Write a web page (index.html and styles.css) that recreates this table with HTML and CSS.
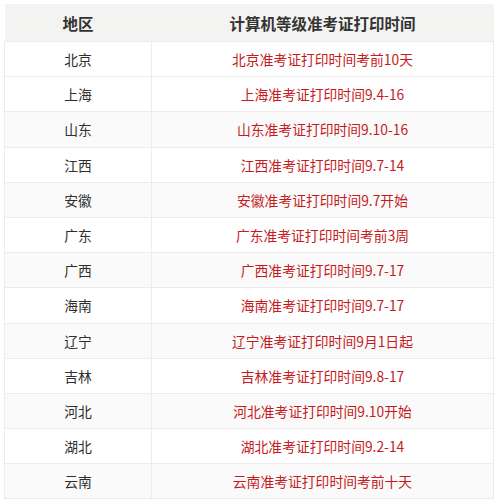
FILE: index.html
```html
<!DOCTYPE html>
<html lang="zh-CN">
<head>
<meta charset="utf-8">
<title>计算机等级准考证打印时间</title>
<link rel="stylesheet" href="styles.css">
</head>
<body>
<table class="exam-table">
  <thead>
    <tr><th class="col-region">地区</th><th class="col-time">计算机等级准考证打印时间</th></tr>
  </thead>
  <tbody>
    <tr><td>北京</td><td class="red">北京准考证打印时间考前10天</td></tr>
    <tr><td>上海</td><td class="red">上海准考证打印时间9.4-16</td></tr>
    <tr><td>山东</td><td class="red">山东准考证打印时间9.10-16</td></tr>
    <tr><td>江西</td><td class="red">江西准考证打印时间9.7-14</td></tr>
    <tr><td>安徽</td><td class="red">安徽准考证打印时间9.7开始</td></tr>
    <tr><td>广东</td><td class="red">广东准考证打印时间考前3周</td></tr>
    <tr><td>广西</td><td class="red">广西准考证打印时间9.7-17</td></tr>
    <tr><td>海南</td><td class="red">海南准考证打印时间9.7-17</td></tr>
    <tr><td>辽宁</td><td class="red">辽宁准考证打印时间9月1日起</td></tr>
    <tr><td>吉林</td><td class="red">吉林准考证打印时间9.8-17</td></tr>
    <tr><td>河北</td><td class="red">河北准考证打印时间9.10开始</td></tr>
    <tr><td>湖北</td><td class="red">湖北准考证打印时间9.2-14</td></tr>
    <tr><td>云南</td><td class="red">云南准考证打印时间考前十天</td></tr>
  </tbody>
</table>
</body>
</html>
```
FILE: styles.css
```css
html, body {
  margin: 0;
  padding: 0;
  background: #ffffff;
}
body {
  padding: 4px 5px 0 4px;
  font-family: "Noto Sans CJK SC", "Noto Sans", sans-serif;
  color: #333333;
}
.exam-table {
  width: 490px;
  border-collapse: collapse;
  table-layout: fixed;
}
.exam-table th {
  height: 37px;
  padding: 0;
  background: #f3f3f2;
  font-size: 15.5px;
  font-weight: bold;
  color: #333333;
  text-align: center;
  vertical-align: middle;
  border: none;
}
.col-region { width: 147px; }
.exam-table td {
  height: 34.2px;
  padding: 0;
  font-size: 13.8px;
  text-align: center;
  vertical-align: middle;
  border: 1px solid #ececec;
  color: #2e2e2e;
}
.exam-table tbody tr:nth-child(odd) td {
  background: #fafafa;
}
.exam-table tbody tr:first-child td {
  background: #ffffff;
}
.exam-table td.red {
  color: #c41a22;
}
```
